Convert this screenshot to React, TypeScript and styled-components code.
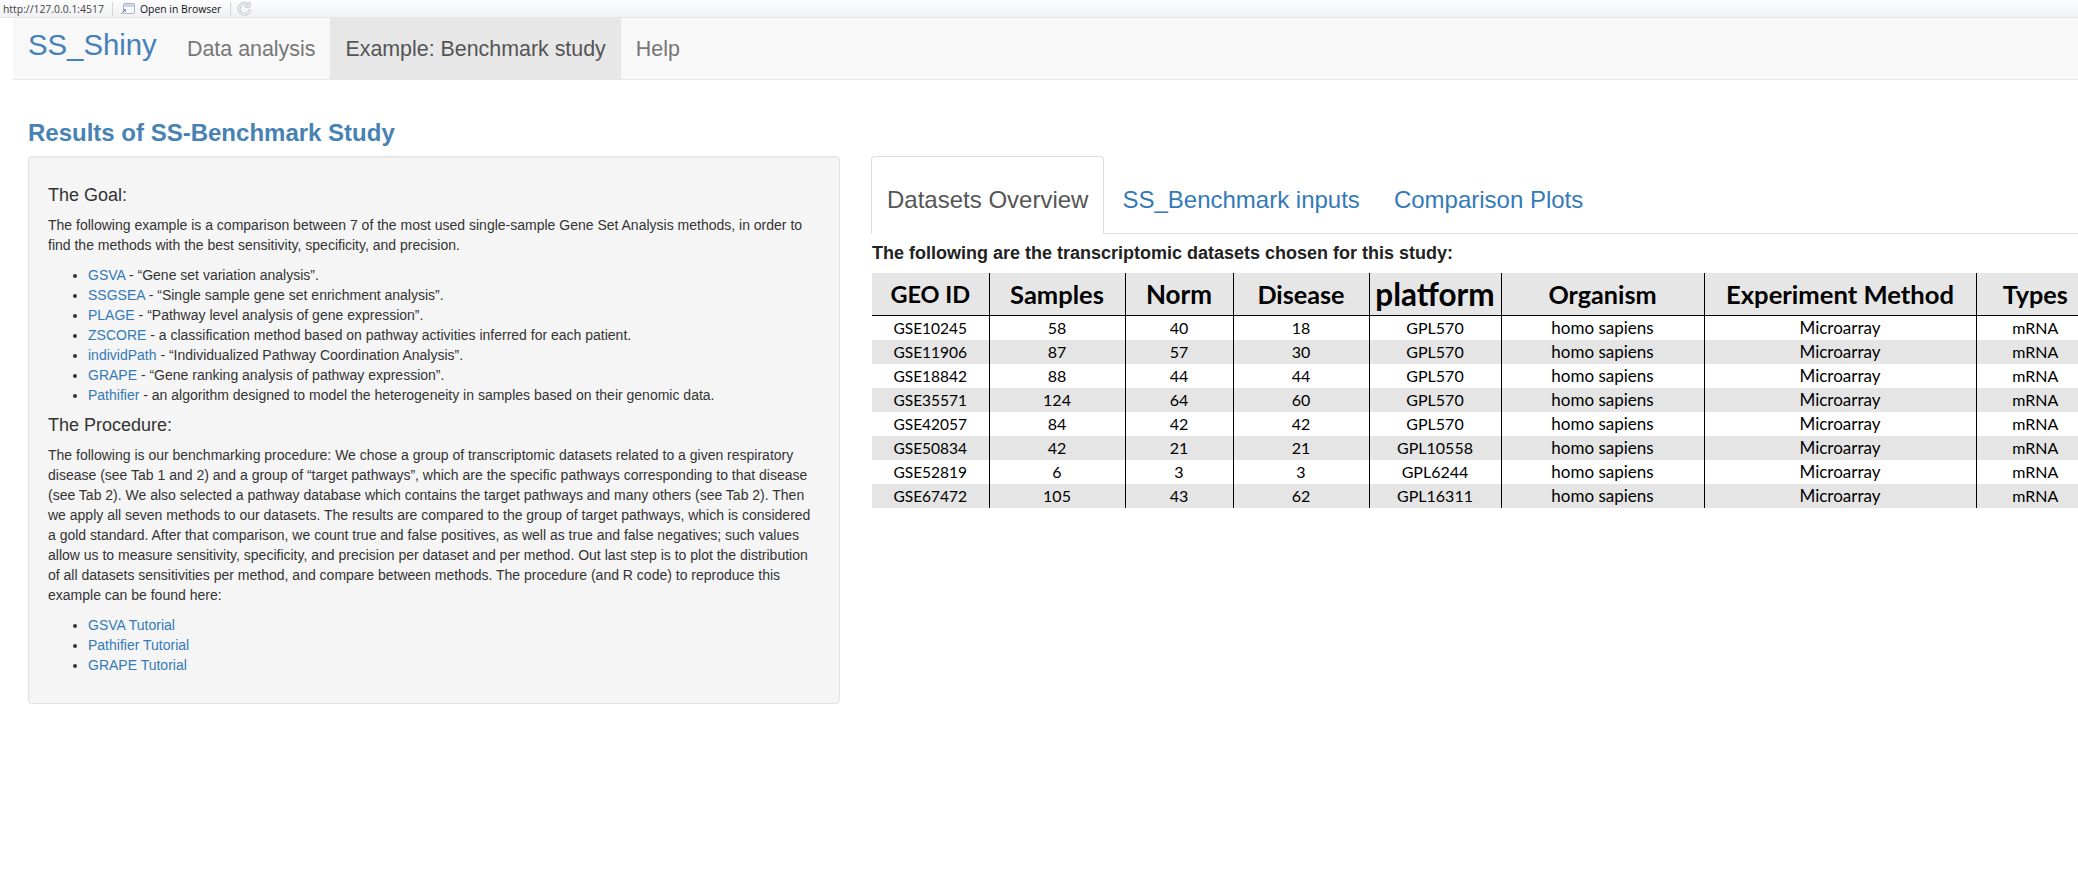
import React from "react";
import styled, { createGlobalStyle } from "styled-components";

const Global = createGlobalStyle`
  html, body { margin: 0; padding: 0; background: #fff; overflow: hidden; }
  body { width: 2078px; height: 876px; font-family: "Liberation Sans", Arial, sans-serif; color: #333; font-size: 14px; line-height: 20px; }
  * { box-sizing: border-box; }
`;

const Page = styled.div`width: 2078px; height: 876px; overflow: hidden; display: flex; flex-direction: column;`;

const TopBar = styled.div`
  height: 18px; flex: none; display: flex; align-items: center; padding-left: 3px;
  background: linear-gradient(#fdfdfe, #f0f1f4); border-bottom: 1px solid #e6e6e6;
  font-family: "Open Sans", sans-serif; font-size: 10.4px; color: #222; white-space: nowrap;
`;
const Address = styled.span`width: 109px; color: #444;`;
const BarSep = styled.span`width: 1px; height: 14px; background: #d4d6da; flex: none;`;
const BrowserBtn = styled.span`display: flex; align-items: center; gap: 5px; margin-left: 7px; width: 110px; color: #111;`;
const Reload = styled.span`display: flex; margin-left: 6px;`;

const Navbar = styled.nav`
  height: 62px; flex: none; margin-left: 13px; display: flex; background: #f8f8f8; border-bottom: 1px solid #e7e7e7;
`;
const Brand = styled.a`
  font-size: 29.3px; line-height: 54px; color: #4580b8; padding: 0 14px 0 15px; width: 159px; white-space: nowrap;
`;
const NavItem = styled.a<{ $active?: boolean }>`
  font-size: 21.4px; line-height: 61px; padding: 1px 15px 0; height: 61px; white-space: nowrap;
  color: ${(p) => (p.$active ? "#555" : "#777")};
  background: ${(p) => (p.$active ? "#e7e7e7" : "transparent")};
`;

const Main = styled.main`padding: 0 0 0 28px; flex: 1; min-height: 0; overflow: hidden;`;
const Title = styled.h3`
  margin: 39px 0 0; font-size: 24px; line-height: 28px; font-weight: bold; color: #4682b4; white-space: nowrap;
`;
const Columns = styled.div`display: flex; align-items: flex-start; margin-top: 9px; gap: 31px;`;

const Panel = styled.section`
  width: 812px; height: 548px; flex: none; padding: 18px 19px 0; background: #f5f5f5;
  border: 1px solid #e3e3e3; border-radius: 4px; box-shadow: inset 0 1px 1px rgba(0,0,0,.05);
`;
const Heading = styled.h4`margin: 10px 0 10px; font-size: 18px; font-weight: normal; line-height: 20px; color: #333;`;
const Para = styled.p`margin: 0 0 10px;`;
const List = styled.ul`margin: 0 0 9px; padding-left: 40px;`;
const Link = styled.a`color: #337ab7;`;

const Right = styled.div`width: 1207px; flex: none; overflow: hidden;`;
const Tabs = styled.div`display: flex; align-items: flex-start; height: 78px; border-bottom: 1px solid #ddd; gap: 2px;`;
const Tab = styled.a<{ $active?: boolean }>`
  font-size: 24px; line-height: 30px; padding: 28px 15px 0; white-space: nowrap; border-radius: 4px 4px 0 0;
  height: ${(p) => (p.$active ? "78px" : "77px")};
  color: ${(p) => (p.$active ? "#555" : "#337ab7")};
  border: 1px solid ${(p) => (p.$active ? "#ddd" : "transparent")};
  border-bottom-color: ${(p) => (p.$active ? "#fff" : "transparent")};
  background: ${(p) => (p.$active ? "#fff" : "transparent")};
`;
const Lead = styled.h4`margin: 8px 0 0 1px; font-size: 18px; line-height: 22px; font-weight: bold; color: #222; white-space: nowrap;`;

const TableWrap = styled.div`margin: 9px 0 0 1px; width: 1206px; overflow: hidden;`;
const Table = styled.table`
  border-collapse: collapse; table-layout: fixed; width: 1222px; font-family: Lato, sans-serif; color: #000;
`;
const HeadCell = styled.th<{ $size: number }>`
  height: 42px; padding: 0; background: #e6e6e6; text-align: center; font-weight: bold; white-space: nowrap;
  font-size: ${(p) => p.$size}px; line-height: 42px;
  border-left: 1px solid #000; border-bottom: 1px solid #000;
  &:first-child { border-left: 0; }
`;
const Row = styled.tr<{ $shade?: boolean }>`
  background: ${(p) => (p.$shade ? "#e5e5e5" : "#fff")};
`;
const Cell = styled.td<{ $size?: number }>`
  height: 24px; padding: 0; text-align: center; font-size: ${(p) => p.$size ?? 16}px; line-height: 24px; white-space: nowrap;
  border-left: 1px solid #000;
  &:first-child { border-left: 0; }
`;

const goals: [string, string][] = [
  ["GSVA", " - “Gene set variation analysis”."],
  ["SSGSEA", " - “Single sample gene set enrichment analysis”."],
  ["PLAGE", " - “Pathway level analysis of gene expression”."],
  ["ZSCORE", " - a classification method based on pathway activities inferred for each patient."],
  ["individPath", " - “Individualized Pathway Coordination Analysis”."],
  ["GRAPE", " - “Gene ranking analysis of pathway expression”."],
  ["Pathifier", " - an algorithm designed to model the heterogeneity in samples based on their genomic data."],
];
const tutorials = ["GSVA Tutorial", "Pathifier Tutorial", "GRAPE Tutorial"];
const cols = [117, 136, 108, 136, 132, 203, 272, 118];
const heads: [string, number][] = [
  ["GEO ID", 23.5],
  ["Samples", 25.5],
  ["Norm", 26],
  ["Disease", 25.2],
  ["platform", 31.5],
  ["Organism", 25.2],
  ["Experiment Method", 25.6],
  ["Types", 25.2],
];
const rows = [
  ["GSE10245", "58", "40", "18", "GPL570"],
  ["GSE11906", "87", "57", "30", "GPL570"],
  ["GSE18842", "88", "44", "44", "GPL570"],
  ["GSE35571", "124", "64", "60", "GPL570"],
  ["GSE42057", "84", "42", "42", "GPL570"],
  ["GSE50834", "42", "21", "21", "GPL10558"],
  ["GSE52819", "6", "3", "3", "GPL6244"],
  ["GSE67472", "105", "43", "62", "GPL16311"],
];

export default function App() {
  return (
    <Page>
      <Global />
      <TopBar>
        <Address>http://127.0.0.1:4517</Address>
        <BarSep />
        <BrowserBtn>
          <svg width="15" height="13" viewBox="0 0 15 13" fill="none">
            <rect x="3.5" y="1.5" width="11" height="10" rx="1.5" fill="#f7f9fb" stroke="#a9b4c2" />
            <path d="M4 3.5h10" stroke="#bcd0e8" strokeWidth="2.4" />
            <path d="M1 12l4-4M3 7.5h2.5V10" stroke="#87919f" />
          </svg>
          Open in Browser
        </BrowserBtn>
        <BarSep />
        <Reload>
          <svg width="15" height="15" viewBox="0 0 15 15" fill="none">
            <path d="M11.3 4.2A5.4 5.4 0 1 0 12.8 8.2" stroke="#bcc6d3" strokeWidth="3" />
            <path d="M11.3 4.2A5.4 5.4 0 1 0 12.8 8.2" stroke="#f3f5f8" strokeWidth="1.2" />
            <path d="M13 1.2v5H8z" fill="#f3f5f8" stroke="#bcc6d3" strokeLinejoin="round" />
          </svg>
        </Reload>
      </TopBar>
      <Navbar>
        <Brand>SS_Shiny</Brand>
        <NavItem>Data analysis</NavItem>
        <NavItem $active>Example: Benchmark study</NavItem>
        <NavItem>Help</NavItem>
      </Navbar>
      <Main>
        <Title>Results of SS-Benchmark Study</Title>
        <Columns>
          <Panel>
            <Heading>The Goal:</Heading>
            <Para>
              The following example is a comparison between 7 of the most used single-sample Gene Set Analysis methods, in order to find the methods with the best sensitivity, specificity, and precision.
            </Para>
            <List>
              {goals.map(([name, rest]) => (
                <li key={name}><Link>{name}</Link>{rest}</li>
              ))}
            </List>
            <Heading>The Procedure:</Heading>
            <Para>
              The following is our benchmarking procedure: We chose a group of transcriptomic datasets related to a given respiratory disease (see Tab 1 and 2) and a group of “target pathways”, which are the specific pathways corresponding to that disease (see Tab 2). We also selected a pathway database which contains the target pathways and many others (see Tab 2). Then we apply all seven methods to our datasets. The results are compared to the group of target pathways, which is considered a gold standard. After that comparison, we count true and false positives, as well as true and false negatives; such values allow us to measure sensitivity, specificity, and precision per dataset and per method. Out last step is to plot the distribution of all datasets sensitivities per method, and compare between methods. The procedure (and R code) to reproduce this example can be found here:
            </Para>
            <List>
              {tutorials.map((t) => (
                <li key={t}><Link>{t}</Link></li>
              ))}
            </List>
          </Panel>
          <Right>
            <Tabs>
              <Tab $active>Datasets Overview</Tab>
              <Tab>SS_Benchmark inputs</Tab>
              <Tab>Comparison Plots</Tab>
            </Tabs>
            <Lead>The following are the transcriptomic datasets chosen for this study:</Lead>
            <TableWrap>
              <Table>
                <colgroup>
                  {cols.map((w, i) => <col key={i} style={{ width: w }} />)}
                </colgroup>
                <thead>
                  <tr>
                    {heads.map(([h, size]) => <HeadCell key={h} $size={size}>{h}</HeadCell>)}
                  </tr>
                </thead>
                <tbody>
                  {rows.map((r, i) => (
                    <Row key={r[0]} $shade={i % 2 === 1}>
                      {r.map((c, j) => <Cell key={j} $size={j === 0 ? 15.5 : 16}>{c}</Cell>)}
                      <Cell $size={17}>homo sapiens</Cell>
                      <Cell $size={17}>Microarray</Cell>
                      <Cell>mRNA</Cell>
                    </Row>
                  ))}
                </tbody>
              </Table>
            </TableWrap>
          </Right>
        </Columns>
      </Main>
    </Page>
  );
}
